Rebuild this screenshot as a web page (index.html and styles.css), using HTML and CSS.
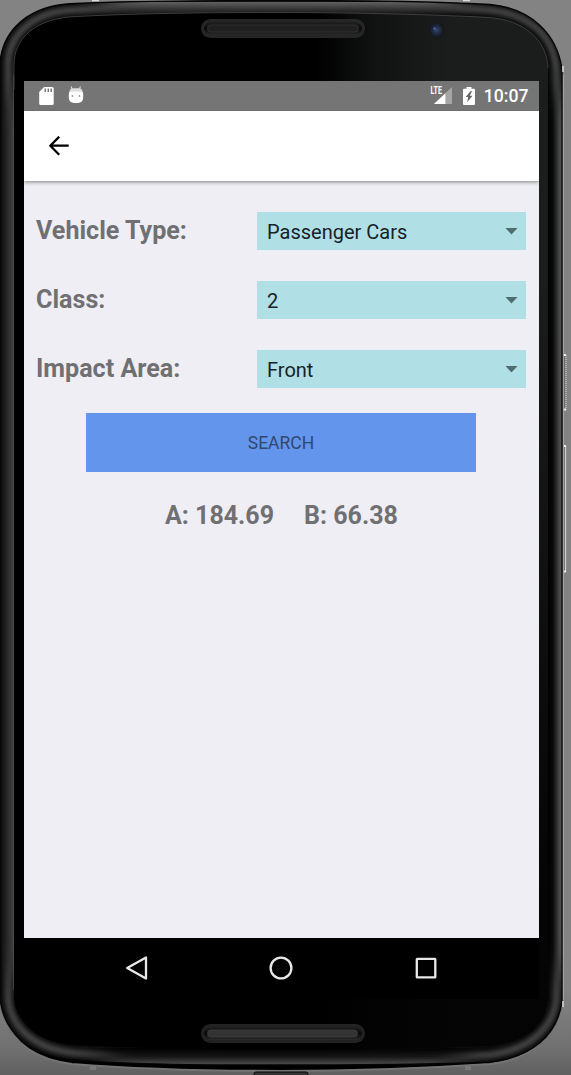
FILE: index.html
```html
<!DOCTYPE html>
<html lang="en">
<head>
<meta charset="utf-8">
<title>Vehicle search</title>
<link rel="stylesheet" href="styles.css">
</head>
<body>
<main class="device">
  <svg class="frame" viewBox="0 0 571 1075" aria-hidden="true">
    <defs>
      <linearGradient id="left"><stop offset="0" stop-color="#070707"/><stop offset=".25" stop-color="#181818"/><stop offset="1" stop-color="#444"/></linearGradient>
      <linearGradient id="right"><stop offset="0" stop-color="#000"/><stop offset=".35" stop-color="#090909"/><stop offset=".85" stop-color="#4b4b4b"/><stop offset="1" stop-color="#555"/></linearGradient>
      <linearGradient id="top" x1="0" y1="0" x2="0" y2="1"><stop offset="0" stop-color="#606060"/><stop offset=".45" stop-color="#393939"/><stop offset="1" stop-color="#080808"/></linearGradient>
      <linearGradient id="bottom" x1="0" y1="0" x2="0" y2="1"><stop offset="0" stop-color="#000"/><stop offset=".5" stop-color="#151515"/><stop offset="1" stop-color="#505050"/></linearGradient>
      <linearGradient id="face" gradientUnits="userSpaceOnUse" x1="315" y1="0" x2="450" y2="0"><stop offset="0" stop-color="#000"/><stop offset=".45" stop-color="#111212"/><stop offset="1" stop-color="#1b1c1c"/></linearGradient>
      <linearGradient id="fade" x1="0" y1="0" x2="0" y2="1"><stop offset=".25" stop-color="#000" stop-opacity="0"/><stop offset=".85" stop-color="#000" stop-opacity=".85"/></linearGradient>
      <linearGradient id="slot" x1="0" y1="0" x2="0" y2="1"><stop offset="0" stop-color="#202020"/><stop offset=".5" stop-color="#090909"/><stop offset="1" stop-color="#292929"/></linearGradient>
      <radialGradient id="lens"><stop offset="0" stop-color="#34446d"/><stop offset=".45" stop-color="#202943"/><stop offset=".8" stop-color="#151719"/><stop offset="1" stop-color="#1c1d1d"/></radialGradient>
      <linearGradient id="shadow" x1="0" y1="0" x2="0" y2="1"><stop offset="0" stop-color="#838383"/><stop offset=".7" stop-color="#707070"/><stop offset="1" stop-color="#606060"/></linearGradient>
      <filter id="soft" filterUnits="userSpaceOnUse" x="-10" y="-10" width="591" height="1095"><feGaussianBlur stdDeviation="2.2"/></filter>
      <filter id="wide" filterUnits="userSpaceOnUse" x="-120" y="-120" width="811" height="1315"><feGaussianBlur stdDeviation="18"/></filter>
      <mask id="sides" maskUnits="userSpaceOnUse" x="0" y="0" width="571" height="1075"><rect x="-90" y="95" width="751" height="880" fill="#fff" filter="url(#wide)"/></mask>
      <mask id="ends" maskUnits="userSpaceOnUse" x="0" y="0" width="571" height="1075"><rect x="105" y="-90" width="355" height="1255" fill="#fff" filter="url(#wide)"/></mask>
      <path id="body" d="M0 62C3 31 27 5 75 3.5C130 1 205 .5 281 .5C370 .5 430 1 490 4.5C531 8 557 34 562 69V1002C557 1036 532 1057 490 1062C430 1065 355 1065 281 1065C210 1065 130 1065 75 1060C30 1057 3 1032 0 998Z"/>
      <path id="glass" d="M14 65C14 38 36 18 76 16.5C145 13 215 12.5 281 12.5C340 12.5 425 14 489 17.5C524 20 547 40 548 68V1000C546 1024 529 1043 489 1046C420 1050 350 1050 281 1050C210 1050 145 1048 73 1045C40 1043 16 1023 14 998Z"/>
      <clipPath id="bodyClip"><use href="#body"/></clipPath>
    </defs>
    <path fill="url(#shadow)" d="M0 990H571V1075H0Z"/>
    <path d="M0 1005C7 1037 29 1059 72 1064C135 1069 210 1071 281 1071S430 1068 490 1064C535 1059 558 1033 562 1002" fill="#000" stroke="#737373" stroke-width="2.2"/>
    <use href="#body" fill="#0a0a0a"/>
    <g clip-path="url(#bodyClip)">
      <path d="M8 65C8 36 32 11 75 10C145 7 215 6.5 281 6.5C340 6.5 425 7 489 10C531 14 554 37 556 69V1000C553 1028 530 1050 489 1055C430 1058 350 1059 281 1059C210 1059 145 1058 75 1053C33 1049 10 1026 8 998Z" fill="none" stroke="#424242" stroke-width="7" filter="url(#soft)"/>
      <g mask="url(#sides)"><path fill="url(#left)" d="M0 0H14V1075H0Z"/><path fill="url(#right)" d="M548 0H562V1075H548Z"/></g>
      <g mask="url(#ends)"><path fill="url(#top)" d="M0 2H562V16H0Z"/><path fill="url(#bottom)" d="M0 1048H562V1065H0Z"/></g>
    </g>
    <use href="#body" fill="none" stroke="#050505" stroke-width="1.3"/>
    <use href="#glass" fill="url(#face)"/>
    <use href="#glass" fill="url(#fade)"/>
    <path d="M14 90V65C14 38 36 18 76 16.5C145 13 215 12.5 281 12.5C340 12.5 425 14 489 17.5C524 20 547 40 548 68" fill="none" stroke="#484848" stroke-width=".8"/>
    <path d="M13.5 75V990" stroke="#505050" stroke-width=".6"/>
    <path d="M563.5 75V1000" stroke="#a2a2a2"/>
    <path d="M92 .5H99M463 .5H470M563 66V72M563 1001V1007" stroke="#ddd" stroke-width="1.5"/>
    <path d="M90 1068H96M465 1068H471" stroke="#777" stroke-width="4"/>
    <rect x="254" y="1072" width="54" height="6" rx="2" fill="#333" stroke="#080808"/>
    <rect x="201" y="19" width="164" height="19" rx="9.5" fill="#262626"/>
    <rect x="204" y="22" width="158" height="13" rx="6.5" fill="url(#slot)"/>
    <rect x="207.5" y="25" width="151" height="7" rx="3.5" fill="#202020" stroke="#383838" stroke-width=".7"/>
    <rect x="201" y="1024" width="164" height="19" rx="9.5" fill="#222"/>
    <rect x="204" y="1027" width="158" height="13" rx="6.5" fill="url(#slot)"/>
    <rect x="207.5" y="1030" width="150" height="7" rx="3.5" fill="#333" stroke="#444" stroke-width=".6"/>
    <circle cx="436.5" cy="30" r="9" fill="url(#lens)"/><circle cx="434.5" cy="28.5" r="1" fill="#5a76a3"/>
    <path d="M564.5 355V410M564.5 446V572" stroke="#666" stroke-width="1"/>
    <path d="M566 355V410" stroke="#bbb" stroke-width="1.6" stroke-dasharray="1 1"/>
    <path d="M565.5 446V572" stroke="#d0d0d0" stroke-width="1.3"/>
    <path d="M564 355H566M564 409.5H566M564 446H566M564 571.5H566" stroke="#eee" stroke-width="2"/>
  </svg>

  <section class="screen">
    <header class="status">
      <svg class="sd" viewBox="0 0 15 18"><path fill="#fff" d="M5.2 0H13.2Q14.7 0 14.7 1.5V16.5Q14.7 18 13.2 18H1.7Q.2 18 .2 16.5V5Z"/><path d="M6.3 1.5V5M9.3 1.5V5M12.2 1.5V5" stroke="#757575" stroke-width="1.5"/></svg>
      <svg class="droid" viewBox="0 0 16 18"><path d="M3.3 .5L4.3 4M12.3 .5L11.3 4" stroke="#eee"/><path fill="#ddd" d="M1.2 6Q2 2.2 4.5 2.2H11.5Q14 2.2 14.8 6Z"/><path fill="#fff" d="M1 6.5Q2 5.5 8 5.5T15 6.5Q15.8 13 14 15.2Q12.5 17 8 17T2 15.2Q.2 13 1 6.5Z"/><circle cx="4.4" cy="10" r=".8" fill="#666"/><circle cx="11.5" cy="10" r=".8" fill="#666"/></svg>
      <span class="spacer"></span>
      <svg class="signal" viewBox="0 0 23 19"><path fill="#a6a6a6" d="M22 1V18H4Z"/><path fill="#fff" d="M15.4 7.2V18H4Z"/><path d="M0 0H12.5V8H8L4 11H0Z" fill="#757575"/><text class="network" x=".5" y="8.3" textLength="11.5" lengthAdjust="spacingAndGlyphs">LTE</text></svg>
      <svg class="battery" viewBox="0 0 12 18"><path fill="#fff" d="M3.5 0H8.5V1.7H11Q12 1.7 12 2.7V17Q12 18 11 18H1Q0 18 0 17V2.7Q0 1.7 1 1.7H3.5Z"/><path fill="#666" d="M7.6 4L2.7 10H5.3L4.2 15.2L9.5 8.7H6.8L9 4Z"/></svg>
      <time class="clock">10:07</time>
    </header>
    <nav class="toolbar">
      <svg class="back" viewBox="0 0 20 20"><path d="M10.2 .7L1.3 9.7L10.2 18.8M1.3 9.7H19.7" fill="none" stroke="#000" stroke-width="2.3"/></svg>
    </nav>
    <div class="content">
      <div class="row"><span class="label">Vehicle Type:</span><div class="select"><span>Passenger Cars</span><i class="caret"></i></div></div>
      <div class="row"><span class="label">Class:</span><div class="select"><span>2</span><i class="caret"></i></div></div>
      <div class="row"><span class="label">Impact Area:</span><div class="select"><span>Front</span><i class="caret"></i></div></div>
      <button class="search">SEARCH</button>
      <div class="results"><span>A: 184.69</span><span>B: 66.38</span></div>
    </div>
    <footer class="navbar">
      <svg viewBox="0 0 24 24"><path d="M21 1.5V22.5L2.2 12Z"/></svg>
      <svg viewBox="0 0 24 24"><circle cx="12" cy="12" r="10.4"/></svg>
      <svg viewBox="0 0 24 24"><rect x="2.8" y="2.8" width="18.5" height="18.5" rx=".4"/></svg>
    </footer>
  </section>
</main>
</body>
</html>
```

FILE: styles.css
```css
* { box-sizing: border-box; }
body { margin: 0; font-family: Roboto, sans-serif; background: #838383; }
.device { position: relative; width: 571px; height: 1075px; padding: 81px 32px 76px 24px; overflow: hidden; }
.frame { position: absolute; inset: 0; width: 571px; height: 1075px; }
.screen { position: relative; display: flex; flex-direction: column; width: 515px; height: 918px; background: #efeef4; }
.status { display: flex; align-items: center; height: 29.5px; padding: 0 10.5px 0 14.5px; background: #757575; }
.sd { width: 15px; height: 18px; }
.droid { width: 16px; height: 18px; margin: -2px 0 0 14.5px; }
.spacer { flex: 1; }
.signal { width: 23px; height: 19px; margin-right: 10px; overflow: visible; }
.network { font: 700 10.5px Roboto, sans-serif; fill: #fff; }
.battery { width: 12px; height: 18px; margin-right: 9px; }
.clock { font-size: 17.6px; font-weight: 500; line-height: 20px; color: #fff; margin-top: 1px; }
.toolbar { display: flex; align-items: center; height: 70.5px; padding-left: 25px; background: #fff; box-shadow: 0 1px 4px #0007; clip-path: inset(0 0 -8px 0); }
.back { width: 20px; height: 20px; }
.content { flex: 1; display: flex; flex-direction: column; padding: 31px 13px 0 12px; }
.row { display: grid; grid-template-columns: 220.5px 269.5px; height: 38px; margin-bottom: 31px; align-items: center; }
.label { font-size: 25.1px; font-weight: 700; line-height: 30px; color: #707073; }
.select { display: flex; justify-content: space-between; align-items: center; height: 38px; padding: 2px 8px 0 10.5px; background: #b0e0e6; color: #172226; font-size: 20px; }
.caret { width: 13px; height: 7px; margin-bottom: 2px; background: #506d70; clip-path: polygon(0 0, 100% 0, 50% 100%); }
.search { width: 390px; height: 58.5px; margin: -6px auto 0 50px; padding: 2px 0 0; border: 0; background: #6495ed; color: #30486f; font: 400 17.5px Roboto, sans-serif; }
.results { display: flex; gap: 30px; padding: 29px 0 0 129px; font-size: 25px; font-weight: 700; line-height: 30px; color: #707073; }
.navbar { display: flex; height: 61.5px; padding: 18px 101px 0 100.5px; justify-content: space-between; background: #000; }
.navbar svg { width: 24px; height: 24px; fill: none; stroke: #e8e8e8; stroke-width: 2.3; stroke-linejoin: round; }
```
